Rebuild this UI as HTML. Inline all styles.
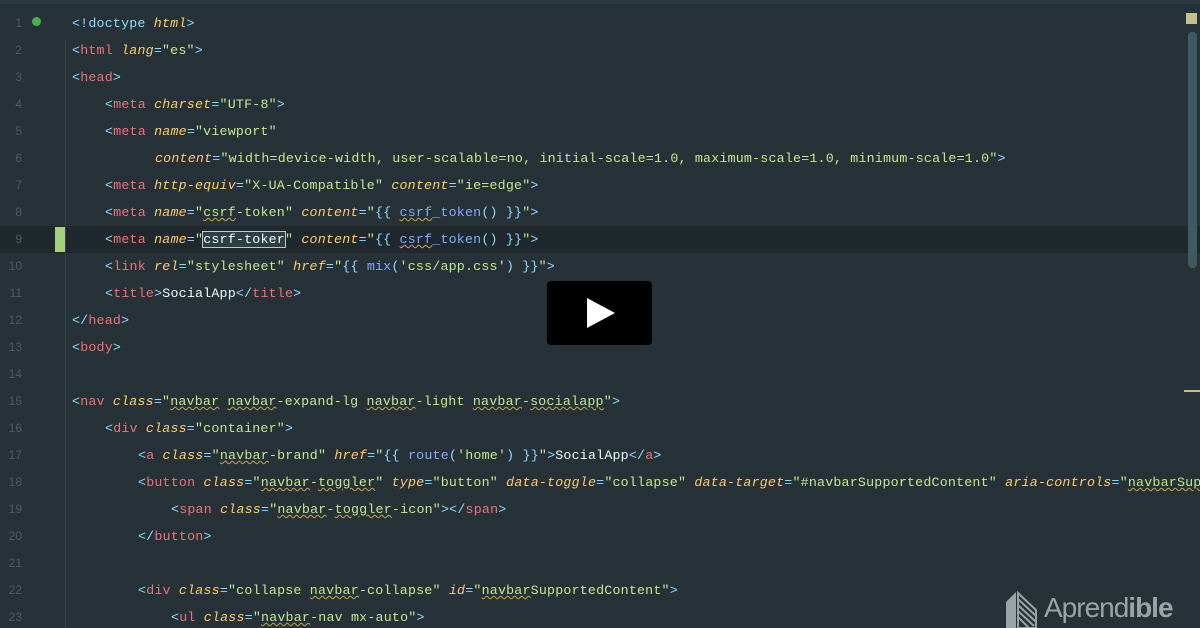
<!DOCTYPE html>
<html><head><meta charset="utf-8"><style>
body{margin:0;width:1200px;height:628px;background:#263238;overflow:hidden;position:relative;font-family:"Liberation Mono",monospace;}
#wrap{position:absolute;left:0;top:0;width:1200px;height:628px;overflow:hidden}
.l{position:absolute;height:27px;line-height:27px;font-size:13.3px;white-space:pre;color:#eeffff;letter-spacing:0.2px}
.n{position:absolute;left:0;width:22px;text-align:right;font-size:12px;line-height:27px;color:#4a5c63;font-family:"Liberation Sans",sans-serif}
.t{color:#f07178}.p{color:#89ddff}.a{color:#ffcb6b;font-style:italic}.s{color:#c3e88d}.f{color:#82aaff}
.w{text-decoration:underline wavy #c9a34a;text-decoration-thickness:1px}
</style></head><body><div id="wrap">
<div style="position:absolute;left:0;top:226px;width:1200px;height:27px;background:#1f282d"></div>
<div style="position:absolute;left:55px;top:227px;width:10px;height:25px;background:#a5d17a"></div>
<div style="position:absolute;left:65px;top:40px;width:1px;height:588px;background:#34444b"></div>
<div style="position:absolute;left:32px;top:17px;width:9px;height:9px;border-radius:50%;background:#4caf50"></div>
<div style="position:absolute;left:1188px;top:32px;width:9px;height:236px;border-radius:4px;background:#3f5b61"></div>
<div style="position:absolute;left:1186px;top:13px;width:11px;height:11px;background:#c8c08a"></div>
<div style="position:absolute;left:1184px;top:390px;width:16px;height:2px;background:#c8c08a"></div>
<div style="position:absolute;left:0;top:0;width:1200px;height:4px;background:#2b3a40"></div>

<div class="n" style="top:10px">1</div><div class="l" style="left:72px;top:10px"><span class="p">&lt;!doctype </span><span class="a">html</span><span class="p">&gt;</span></div>
<div class="n" style="top:37px">2</div><div class="l" style="left:72px;top:37px"><span class="p">&lt;</span><span class="t">html </span><span class="a">lang</span><span class="p">=</span><span class="s">"es"</span><span class="p">&gt;</span></div>
<div class="n" style="top:64px">3</div><div class="l" style="left:72px;top:64px"><span class="p">&lt;</span><span class="t">head</span><span class="p">&gt;</span></div>
<div class="n" style="top:91px">4</div><div class="l" style="left:105px;top:91px"><span class="p">&lt;</span><span class="t">meta </span><span class="a">charset</span><span class="p">=</span><span class="s">"UTF-8"</span><span class="p">&gt;</span></div>
<div class="n" style="top:118px">5</div><div class="l" style="left:105px;top:118px"><span class="p">&lt;</span><span class="t">meta </span><span class="a">name</span><span class="p">=</span><span class="s">"viewport"</span></div>
<div class="n" style="top:145px">6</div><div class="l" style="left:155px;top:145px"><span class="a">content</span><span class="p">=</span><span class="s">"width=device-width, user-scalable=no, initial-scale=1.0, maximum-scale=1.0, minimum-scale=1.0"</span><span class="p">&gt;</span></div>
<div class="n" style="top:172px">7</div><div class="l" style="left:105px;top:172px"><span class="p">&lt;</span><span class="t">meta </span><span class="a">http-equiv</span><span class="p">=</span><span class="s">"X-UA-Compatible" </span><span class="a">content</span><span class="p">=</span><span class="s">"ie=edge"</span><span class="p">&gt;</span></div>
<div class="n" style="top:199px">8</div><div class="l" style="left:105px;top:199px"><span class="p">&lt;</span><span class="t">meta </span><span class="a">name</span><span class="p">=</span><span class="s">"<span class="w">csrf</span>-token" </span><span class="a">content</span><span class="p">=</span><span class="s">"</span><span class="p">{{ </span><span class="f"><span class="w">csrf</span>_token</span><span class="p">() }}</span><span class="s">"</span><span class="p">&gt;</span></div>
<div class="n" style="top:226px">9</div><div class="l" style="left:105px;top:226px"><span class="p">&lt;</span><span class="t">meta </span><span class="a">name</span><span class="p">=</span><span class="s">"<span style="outline:1px solid #c0c8cc;background:#2f3e45;color:#eeffff">csrf-toker</span>" </span><span class="a">content</span><span class="p">=</span><span class="s">"</span><span class="p">{{ </span><span class="f"><span class="w">csrf</span>_token</span><span class="p">() }}</span><span class="s">"</span><span class="p">&gt;</span></div>
<div class="n" style="top:253px">10</div><div class="l" style="left:105px;top:253px"><span class="p">&lt;</span><span class="t">link </span><span class="a">rel</span><span class="p">=</span><span class="s">"stylesheet" </span><span class="a">href</span><span class="p">=</span><span class="s">"</span><span class="p">{{ </span><span class="f">mix</span><span class="p">(</span><span class="s">'css/app.css'</span><span class="p">) }}</span><span class="s">"</span><span class="p">&gt;</span></div>
<div class="n" style="top:280px">11</div><div class="l" style="left:105px;top:280px"><span class="p">&lt;</span><span class="t">title</span><span class="p">&gt;</span>SocialApp<span class="p">&lt;/</span><span class="t">title</span><span class="p">&gt;</span></div>
<div class="n" style="top:307px">12</div><div class="l" style="left:72px;top:307px"><span class="p">&lt;/</span><span class="t">head</span><span class="p">&gt;</span></div>
<div class="n" style="top:334px">13</div><div class="l" style="left:72px;top:334px"><span class="p">&lt;</span><span class="t">body</span><span class="p">&gt;</span></div>
<div class="n" style="top:361px">14</div>
<div class="n" style="top:388px">15</div><div class="l" style="left:72px;top:388px"><span class="p">&lt;</span><span class="t">nav </span><span class="a">class</span><span class="p">=</span><span class="s">"<span class="w">navbar</span> <span class="w">navbar</span>-expand-lg <span class="w">navbar</span>-light <span class="w">navbar</span>-<span class="w">socialapp</span>"</span><span class="p">&gt;</span></div>
<div class="n" style="top:415px">16</div><div class="l" style="left:105px;top:415px"><span class="p">&lt;</span><span class="t">div </span><span class="a">class</span><span class="p">=</span><span class="s">"container"</span><span class="p">&gt;</span></div>
<div class="n" style="top:442px">17</div><div class="l" style="left:138px;top:442px"><span class="p">&lt;</span><span class="t">a </span><span class="a">class</span><span class="p">=</span><span class="s">"<span class="w">navbar</span>-brand" </span><span class="a">href</span><span class="p">=</span><span class="s">"</span><span class="p">{{ </span><span class="f">route</span><span class="p">(</span><span class="s">'home'</span><span class="p">) }}</span><span class="s">"</span><span class="p">&gt;</span>SocialApp<span class="p">&lt;/</span><span class="t">a</span><span class="p">&gt;</span></div>
<div class="n" style="top:469px">18</div><div class="l" style="left:138px;top:469px"><span class="p">&lt;</span><span class="t">button </span><span class="a">class</span><span class="p">=</span><span class="s">"<span class="w">navbar</span>-<span class="w">toggler</span>" </span><span class="a">type</span><span class="p">=</span><span class="s">"button" </span><span class="a">data-toggle</span><span class="p">=</span><span class="s">"collapse" </span><span class="a">data-target</span><span class="p">=</span><span class="s">"#navbarSupportedContent" </span><span class="a">aria-controls</span><span class="p">=</span><span class="s">"<span class="w">navbarSup</span></span></div>
<div class="n" style="top:496px">19</div><div class="l" style="left:171px;top:496px"><span class="p">&lt;</span><span class="t">span </span><span class="a">class</span><span class="p">=</span><span class="s">"<span class="w">navbar</span>-<span class="w">toggler</span>-icon"</span><span class="p">&gt;&lt;/</span><span class="t">span</span><span class="p">&gt;</span></div>
<div class="n" style="top:523px">20</div><div class="l" style="left:138px;top:523px"><span class="p">&lt;/</span><span class="t">button</span><span class="p">&gt;</span></div>
<div class="n" style="top:550px">21</div>
<div class="n" style="top:577px">22</div><div class="l" style="left:138px;top:577px"><span class="p">&lt;</span><span class="t">div </span><span class="a">class</span><span class="p">=</span><span class="s">"collapse <span class="w">navbar</span>-collapse" </span><span class="a">id</span><span class="p">=</span><span class="s">"<span class="w">navbar</span>SupportedContent"</span><span class="p">&gt;</span></div>
<div class="n" style="top:604px">23</div><div class="l" style="left:171px;top:604px"><span class="p">&lt;</span><span class="t">ul </span><span class="a">class</span><span class="p">=</span><span class="s">"<span class="w">navbar</span>-nav mx-auto"</span><span class="p">&gt;</span></div>

<div style="position:absolute;left:547px;top:281px;width:105px;height:64px;background:#000;border-radius:4px"></div>
<svg style="position:absolute;left:586px;top:297px" width="30" height="32"><path d="M1 1 L29 16 L1 31Z" fill="#fff"/></svg>

<svg style="position:absolute;left:1004px;top:590px" width="34" height="38"><path d="M2 12 L12 2 L12 38 L2 38Z" fill="#9aa3a7"/><path d="M14 3 L32 20 L32 38 L14 38Z" fill="none" stroke="#9aa3a7" stroke-width="2"/><path d="M14 9 L32 26 M14 15 L32 32 M14 21 L30 36 M14 27 L25 38" stroke="#9aa3a7" stroke-width="2"/></svg>
<div style="position:absolute;left:1044px;top:592px;font-family:'Liberation Sans',sans-serif;font-size:28px;color:#9aa3a7;letter-spacing:-1px">Aprend<b>ible</b></div>
</div></body></html>
